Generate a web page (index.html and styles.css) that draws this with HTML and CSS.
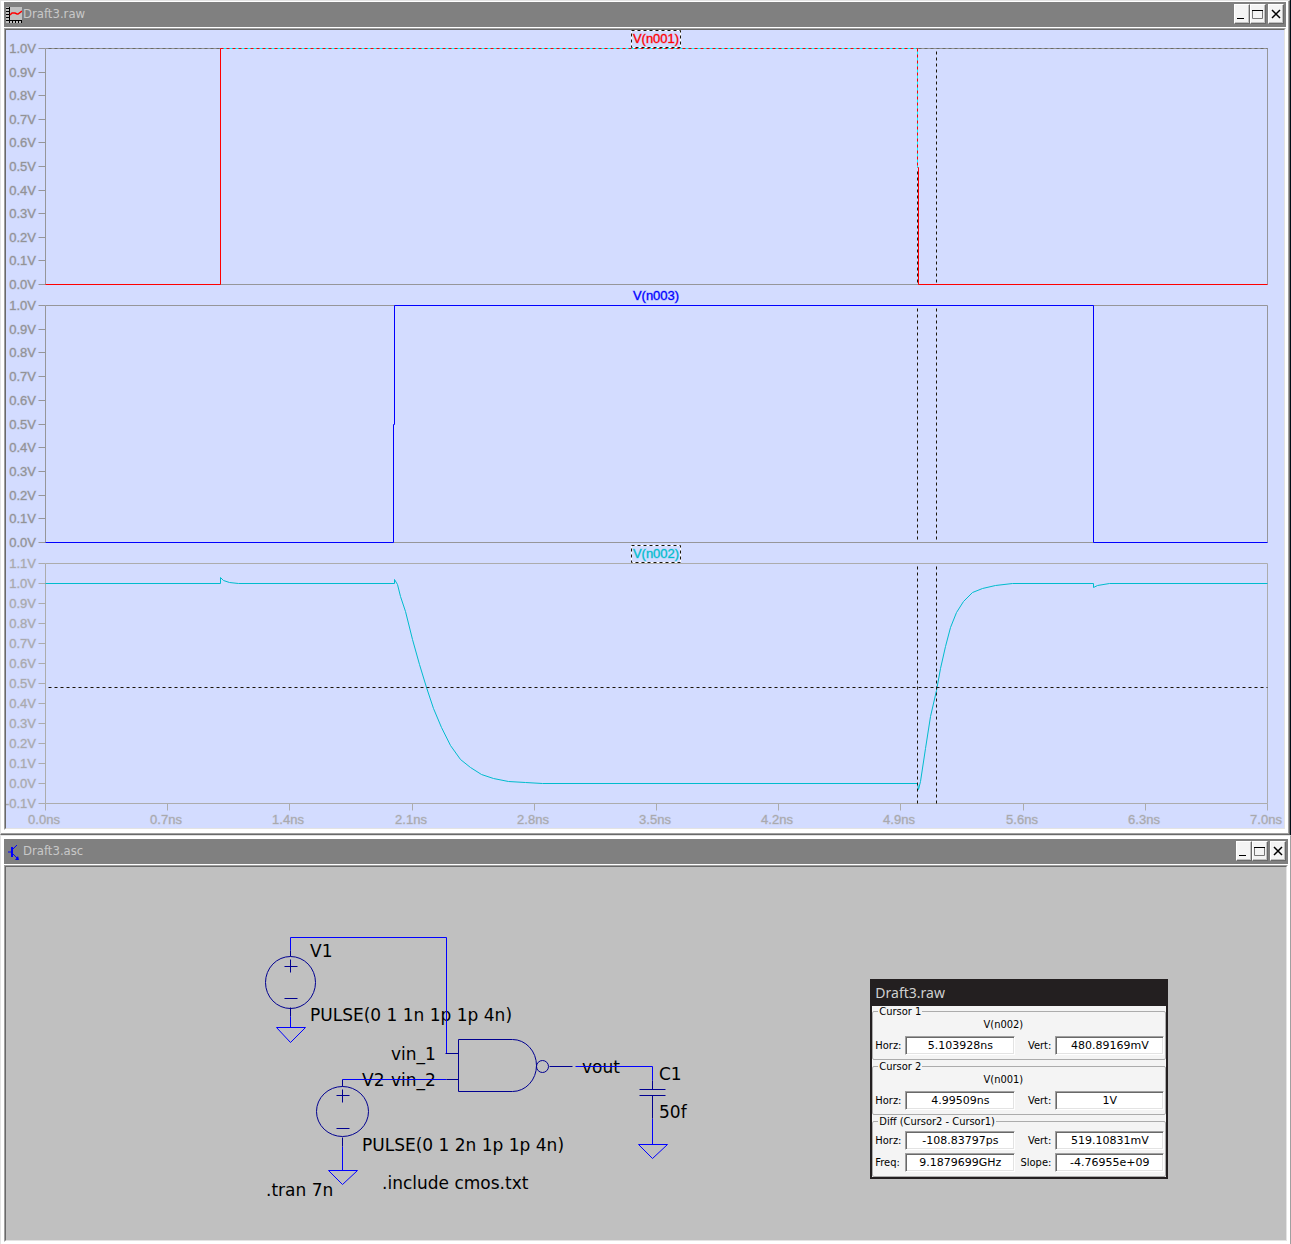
FILE: index.html
```html
<!DOCTYPE html>
<html lang="en">
<head>
<meta charset="utf-8">
<meta name="viewport" content="width=device-width, initial-scale=1">
<title>Draft3</title>
<link rel="stylesheet" href="styles.css">
</head>
<body>
<main class="workspace">

<section class="window window-raw" aria-label="Draft3.raw">
  <header class="titlebar">
    <svg class="title-icon" viewBox="0 0 16 16" aria-hidden="true">
      <rect width="16" height="16" fill="#c0c0c0"/>
      <path d="M3 0h1v13h12v1H3zM0 1h3v1H0zM0 4h3v1H0zM0 7h3v1H0zM0 10h3v1H0zM0 13h3v1H0zM3 14h1v2H3zM6 14h1v2H6zM9 14h1v2H9zM12 14h1v2h-1zM15 14h1v2h-1z"/>
      <path d="M4 8 6 6h3l2 1h1l4-3" fill="none" stroke="#f00" stroke-width="1.5"/>
    </svg>
    <h1 class="title">Draft3.raw</h1>
    <div class="buttons">
      <button type="button" aria-label="Minimize"><svg viewBox="0 0 14 18"><path d="M2 13h7v1H2z"/></svg></button>
      <button type="button" aria-label="Maximize"><svg viewBox="0 0 14 18"><path d="M1 5h11v1H1z"/><path d="M1.500 6v7.500h10V6" fill="none" stroke="#777"/></svg></button>
      <button type="button" class="close" aria-label="Close"><svg viewBox="0 0 14 18"><path d="m3 5 8 8m0-8-8 8" fill="none" stroke="#000" stroke-width="1.5"/></svg></button>
    </div>
  </header>
  <div class="client client-plot">
    <svg class="canvas" viewBox="6 30 1278 798" role="img" aria-label="Waveforms">
      <g class="axis-text y-labels">
        <text x="36" y="53">1.0V</text><text x="36" y="77">0.9V</text><text x="36" y="100">0.8V</text><text x="36" y="124">0.7V</text><text x="36" y="147">0.6V</text><text x="36" y="171">0.5V</text><text x="36" y="195">0.4V</text><text x="36" y="218">0.3V</text><text x="36" y="242">0.2V</text><text x="36" y="265">0.1V</text><text x="36" y="289">0.0V</text>
        <text x="36" y="310">1.0V</text><text x="36" y="334">0.9V</text><text x="36" y="357">0.8V</text><text x="36" y="381">0.7V</text><text x="36" y="405">0.6V</text><text x="36" y="429">0.5V</text><text x="36" y="452">0.4V</text><text x="36" y="476">0.3V</text><text x="36" y="500">0.2V</text><text x="36" y="523">0.1V</text><text x="36" y="547">0.0V</text>
      </g>
      <g class="axis-text y-labels pale-text">
        <text x="36" y="568">1.1V</text><text x="36" y="588">1.0V</text><text x="36" y="608">0.9V</text><text x="36" y="628">0.8V</text><text x="36" y="648">0.7V</text><text x="36" y="668">0.6V</text><text x="36" y="688">0.5V</text><text x="36" y="708">0.4V</text><text x="36" y="728">0.3V</text><text x="36" y="748">0.2V</text><text x="36" y="768">0.1V</text><text x="36" y="788">0.0V</text><text x="36" y="808">-0.1V</text>
      </g>
      <g class="axis-text x-labels pale-text">
        <text x="44" y="824">0.0ns</text><text x="166" y="824">0.7ns</text><text x="288" y="824">1.4ns</text><text x="411" y="824">2.1ns</text><text x="533" y="824">2.8ns</text><text x="655" y="824">3.5ns</text><text x="777" y="824">4.2ns</text><text x="899" y="824">4.9ns</text><text x="1022" y="824">5.6ns</text><text x="1144" y="824">6.3ns</text><text x="1266" y="824">7.0ns</text>
      </g>
      <g class="lines" transform="translate(.5 .5)">
        <path class="frame" d="M45 48V284H1267V48zM38 48h7M38 72h7M38 95h7M38 119h7M38 142h7M38 166h7M38 190h7M38 213h7M38 237h7M38 260h7M38 284h7"/>
        <path class="frame" d="M45 305V542H1267V305zM38 305h7M38 329h7M38 352h7M38 376h7M38 400h7M38 424h7M38 447h7M38 471h7M38 495h7M38 518h7M38 542h7"/>
        <path class="frame pale" d="M45 563V803H1267V563zM38 563h7M38 583h7M38 603h7M38 623h7M38 643h7M38 663h7M38 683h7M38 703h7M38 723h7M38 743h7M38 763h7M38 783h7M38 803h7M45 803v7M167 803v7M289 803v7M412 803v7M534 803v7M656 803v7M778 803v7M900 803v7M1023 803v7M1145 803v7M1267 803v7"/>
        <path class="dash top" d="M48 48H220M918 48H1267"/>
        <path class="red" d="M45 284H220V48H917V167H918V284H1267"/>
        <path class="dash inverted" d="M223 48H917M917 51V167"/>
        <path class="blue" d="M45 542H393V424H394V305H1093V542H1267"/>
        <path class="cyan" d="M45 583H220V577L223 580 229 582 238 583H394V579L397 584 400 596 405 611 412 639 419 664 426 687 433 708 441 727 450 745 460 759 470 767 481 774 493 778 508 781 525 782 542 783H917L918 789 920 781 925 748 930 716 936 690 940 668 945 646 950 627 956 612 963 601 972 592 982 588 995 585 1012 583H1093V587L1097 585 1109 583H1267"/>
        <path class="dash" d="M917 171V282M936 51V282M917 308V540M936 308V540M917 566V803M936 566V803M48 687H1267"/>
      </g>
      <g class="lines" transform="translate(.5 .5)">
        <path class="white" d="M631 30h49v17h-49zM631 545h49v17h-49z"/>
        <path class="dash" d="M631 30h49v17h-49zM631 545h49v17h-49z"/>
      </g>
      <g class="trace-names">
        <text class="name-red" x="656" y="43">V(n001)</text>
        <text class="name-blue" x="656" y="300">V(n003)</text>
        <text class="name-cyan" x="656" y="558">V(n002)</text>
      </g>
    </svg>
  </div>
</section>

<section class="window window-asc" aria-label="Draft3.asc">
  <header class="titlebar">
    <svg class="title-icon" viewBox="0 0 16 16" aria-hidden="true">
      <path d="M2 8h4M6 6l5-5M6 9l6 6" fill="none" stroke="#00f"/>
      <path d="M5 3h2v10H5zM13 16H9l3-4z" fill="#00f"/>
    </svg>
    <h1 class="title">Draft3.asc</h1>
    <div class="buttons">
      <button type="button" aria-label="Minimize"><svg viewBox="0 0 14 18"><path d="M2 13h7v1H2z"/></svg></button>
      <button type="button" aria-label="Maximize"><svg viewBox="0 0 14 18"><path d="M1 5h11v1H1z"/><path d="M1.500 6v7.500h10V6" fill="none" stroke="#777"/></svg></button>
      <button type="button" class="close" aria-label="Close"><svg viewBox="0 0 14 18"><path d="m3 5 8 8m0-8-8 8" fill="none" stroke="#000" stroke-width="1.5"/></svg></button>
    </div>
  </header>
  <div class="client client-schematic">
    <svg class="canvas" viewBox="6 867 1280 373" role="img" aria-label="Schematic">
      <g class="net-text">
        <text x="310" y="957">V1</text>
        <text x="310" y="1021">PULSE(0 1 1n 1p 1p 4n)</text>
        <text x="391" y="1060">vin_1</text>
        <text x="362" y="1086">V2</text>
        <text x="391" y="1086">vin_2</text>
        <text x="362" y="1151">PULSE(0 1 2n 1p 1p 4n)</text>
        <text x="266" y="1196">.tran 7n</text>
        <text x="382" y="1189">.include cmos.txt</text>
        <text x="582" y="1073">vout</text>
        <text x="659" y="1080">C1</text>
        <text x="659" y="1118">50f</text>
      </g>
      <g class="lines" transform="translate(.5 .5)">
        <path class="wire" d="M290 950V937H446V1053M342 1079H446M575 1066H652V1080M652 1118V1144M290 1016V1027M342 1146V1170"/>
        <path class="wire" d="M276 1027H305L290 1042zM328 1170H357L342 1184zM638 1144H667L652 1158z"/>
        <path class="symbol" d="M290 950V956M284 966H297M290 959V972M284 998H297M290 1007V1016"/>
        <path class="symbol" d="M342 1079V1086M336 1095H349M342 1089V1102M336 1128H349M342 1137V1146"/>
        <ellipse class="symbol" cx="290" cy="982" rx="25" ry="26"/>
        <ellipse class="symbol" cx="342" cy="1111" rx="26" ry="25"/>
        <path class="symbol" d="M445 1053H458M446 1079H458M512 1091H458V1039H512A24 26 0 0 1 512 1091M549 1066H572"/>
        <circle class="symbol" cx="542" cy="1066" r="6"/>
        <path class="symbol" d="M652 1080V1089M639 1089H665M639 1095H665M652 1095V1118"/>
      </g>
    </svg>

    <form class="cursors" aria-label="Draft3.raw cursors">
      <h2 class="cursors-title">Draft3.raw</h2>
      <fieldset>
        <legend>Cursor 1</legend>
        <p class="signal">V(n002)</p>
        <div class="fields">
          <label for="h1">Horz:</label><input id="h1" value="5.103928ns" readonly>
          <label class="second" for="v1">Vert:</label><input id="v1" value="480.89169mV" readonly>
        </div>
      </fieldset>
      <fieldset>
        <legend>Cursor 2</legend>
        <p class="signal">V(n001)</p>
        <div class="fields">
          <label for="h2">Horz:</label><input id="h2" value="4.99509ns" readonly>
          <label class="second" for="v2">Vert:</label><input id="v2" value="1V" readonly>
        </div>
      </fieldset>
      <fieldset>
        <legend>Diff (Cursor2 - Cursor1)</legend>
        <div class="fields">
          <label for="h3">Horz:</label><input id="h3" value="-108.83797ps" readonly>
          <label class="second" for="v3">Vert:</label><input id="v3" value="519.10831mV" readonly>
          <label for="f3">Freq:</label><input id="f3" value="9.1879699GHz" readonly>
          <label class="second" for="s3">Slope:</label><input id="s3" value="-4.76955e+09" readonly>
        </div>
      </fieldset>
    </form>
  </div>
</section>

</main>
</body>
</html>
```
FILE: styles.css
```css
* { box-sizing: border-box; }

body {
  margin: 0;
  background: #001018;
  font-family: "DejaVu Sans Condensed", "DejaVu Sans", sans-serif;
  color: #000;
}

/* Windows */
.workspace { display: flex; flex-direction: column; }

.window {
  background: #fff;
  border: 1px solid #e3e3e3;
}
.window-raw {
  margin-right: 1px;
  padding: 1px 3px 4px;
  border-right-color: #696969;
  border-bottom-color: #696969;
  box-shadow: inset -1px -1px #a0a0a0;
}
.window-asc {
  padding: 3px 2px 2px 3px;
  border-width: 1px 1px 0;
  border-right-color: #a0a0a0;
}

.titlebar {
  display: flex;
  align-items: center;
  height: 25px;
  padding: 0 2px 1px;
  background: #808080;
}
.title-icon { width: 16px; height: 16px; margin-top: 2px; }
.title {
  flex: 1;
  margin: 0 0 0 1px;
  font-size: 13px;
  line-height: 16px;
  font-weight: 400;
  color: #c8c8c8;
}
.buttons { display: flex; }
.buttons button {
  width: 16px;
  height: 20px;
  padding: 0;
  border: 1px solid;
  border-color: #fff #696969 #696969 #fff;
  background: #f4f4f4;
  box-shadow: inset -1px -1px #c0c0c0;
}
.buttons .close { margin-left: 2px; }
.buttons svg { display: block; width: 14px; height: 18px; }

.client {
  position: relative;
  margin-top: 1px;
  border: 1px solid;
  border-color: #a0a0a0 #fff #fff #a0a0a0;
}
.canvas {
  display: block;
  width: 100%;
  height: auto;
  border: 1px solid;
  border-color: #696969 #e3e3e3 #e3e3e3 #696969;
}
.client-plot { background: #d3dcff; }
.client-schematic { background: #c0c0c0; }

/* Drawing primitives */
.lines { fill: none; stroke-width: 1; }
.frame { stroke: #969699; }
.frame.pale { stroke: #acacac; }
.red { stroke: #f00; }
.blue { stroke: #00f; }
.cyan { stroke: #00bccd; }
.white { stroke: #fff; }
.dash { stroke: #1a1508; stroke-dasharray: 3 3; }
.dash.top { stroke: #6b6b62; }
.dash.inverted { stroke: #0ff; }

.axis-text,
.trace-names {
  font: 13px "Liberation Sans", Arial, sans-serif;
  stroke-width: 1;
  stroke-opacity: .35;
}
.axis-text { fill: #929295; stroke: #929295; }
.axis-text.pale-text { fill: #a9a9ad; stroke: #a9a9ad; }
.name-red { fill: #f00; stroke: #f00; }
.name-blue { fill: #00f; stroke: #00f; }
.name-cyan { fill: #00bccd; stroke: #00bccd; }
.y-labels { text-anchor: end; }
.x-labels,
.trace-names { text-anchor: middle; }

.wire { stroke: #00f; }
.symbol { stroke: #000090; }
.net-text { font: 17px "DejaVu Sans", sans-serif; }

/* Cursor read-out window */
.cursors {
  position: absolute;
  top: 30%;
  left: 67.5%;
  width: 298px;
  border: 2px solid #231f20;
  background: #f4f4f4;
  font-size: 11px;
  line-height: 12px;
}
.cursors-title {
  margin: 0;
  padding: 0 3px 2px;
  background: #231f20;
  color: #d0d0d0;
  font: 14px/23px "Noto Sans", sans-serif;
}
.cursors fieldset {
  margin: 0;
  padding: 0 0 4px;
  border: 1px solid #acacac;
  border-radius: 2px;
}
.cursors fieldset + fieldset { margin-top: 1px; }
.cursors legend {
  margin-left: 5px;
  padding: 0 1px;
  line-height: 12px;
}
.signal {
  margin: 1px 0 2px;
  padding-right: 32px;
  text-align: center;
}
.fields {
  display: grid;
  grid-template-columns: 30px 110px 40px 1fr;
  row-gap: 3px;
  align-items: center;
  padding: 3px 1px 0 2px;
}
.fields label { padding-top: 2px; }
.fields .second { padding-right: 4px; text-align: right; }
.fields input {
  width: 100%;
  min-width: 0;
  height: 19px;
  padding: 0 1px;
  border: 1px solid;
  border-color: #a0a0a0 #fff #fff #a0a0a0;
  box-shadow: inset 1px 1px #696969, inset -1px -1px #e3e3e3;
  background: #fff;
  color: #000;
  font: 11px "DejaVu Sans", sans-serif;
  text-align: center;
}
```
